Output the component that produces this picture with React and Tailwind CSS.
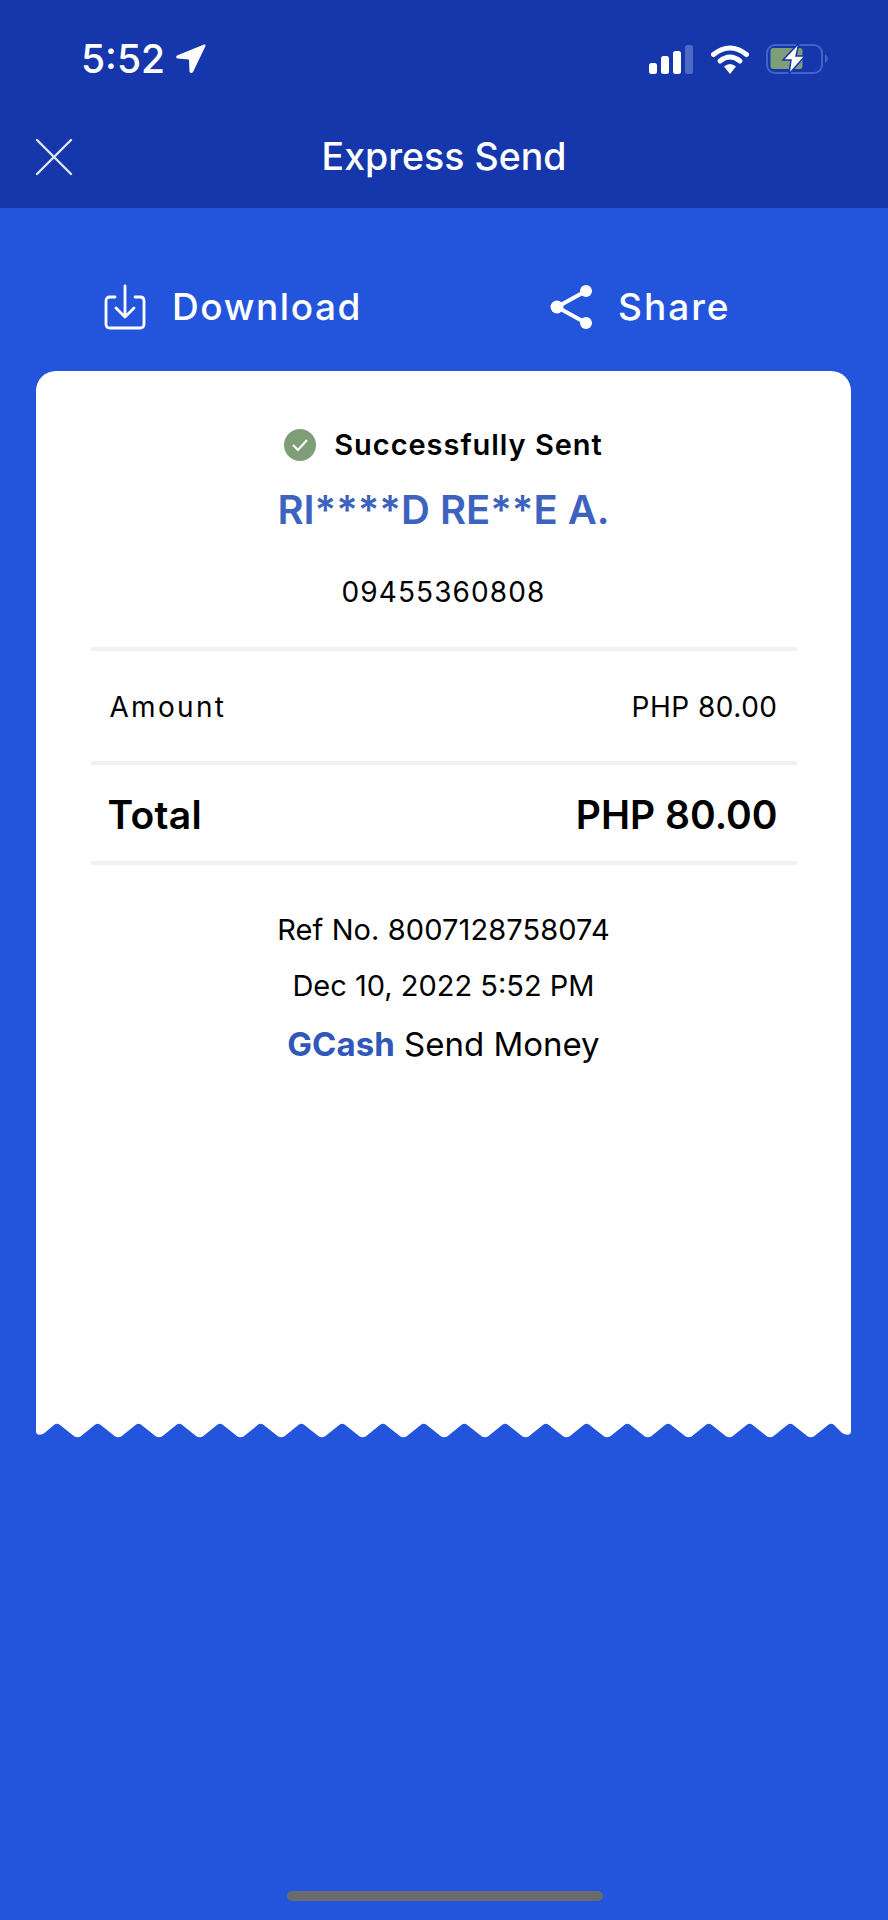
const sans = "font-['Inter','Liberation_Sans',sans-serif]";

// torn paper edge along the bottom of the receipt
function tornEdgePath() {
  const period = 40.74;
  let d = "M0 0 L0 9 Q0 12.8 3.5 12.8 Q6.5 12.8 8.5 11 L18 3 Q21 0.5 24 3 L38.5 14.5 Q41.5 16 44.5 14.5";
  for (let i = 1; i < 20; i++) {
    const p = 21 + i * period;
    d += ` L${(p - 3).toFixed(1)} 3 Q${p.toFixed(1)} 0.5 ${(p + 3).toFixed(1)} 3`;
    if (i < 19) d += ` L${(p + 17.5).toFixed(1)} 14.5 Q${(p + 20.4).toFixed(1)} 16 ${(p + 23.5).toFixed(1)} 14.5`;
  }
  d += " L806 11 Q809 12.8 811.5 12.8 Q815 12.8 815 9 L815 0 Z";
  return d;
}

function StatusBar() {
  return (
    <div className="h-[104px] pt-[40px] pl-[81px] pr-[60px] flex justify-between items-start">
      <div className="flex items-center gap-[11px] h-[38px]">
        <span className="text-white text-[39px] leading-[38px] font-medium">5:52</span>
        <svg width="30" height="30" viewBox="0 0 30 30">
          <path d="M28 0.5 L1 11.5 Q-1 13.5 1.5 14.5 L13 15.5 L13.5 27.5 Q15 30.5 17 28 L29.5 2 Q30 0 28 0.5 Z" fill="#fff" />
        </svg>
      </div>
      <div className="flex items-center h-[38px]">
        <svg width="44" height="29" viewBox="0 0 44 29" className="mr-[18px]">
          <rect x="0" y="18" width="8" height="11" rx="2.5" fill="#fff" />
          <rect x="12" y="11" width="8" height="18" rx="2.5" fill="#fff" />
          <rect x="24" y="6" width="8" height="23" rx="2.5" fill="#fff" />
          <rect x="36" y="0" width="8" height="29" rx="2.5" fill="#4d6bc6" />
        </svg>
        <svg width="38" height="29" viewBox="0 0 38 29" className="mr-[17px]">
          <path d="M2.5 9.5 Q19 -3.5 35.5 9.5" fill="none" stroke="#fff" strokeWidth="5" strokeLinecap="round" />
          <path d="M9 16 Q19 8 29 16" fill="none" stroke="#fff" strokeWidth="5" strokeLinecap="round" />
          <path d="M13 21.5 Q19 16.5 25 21.5 L19 29 Z" fill="#fff" />
        </svg>
        <svg width="62" height="32" viewBox="0 0 62 32">
          <rect x="1" y="2" width="55" height="28" rx="8" fill="none" stroke="#4263c8" strokeWidth="2" />
          <rect x="4.5" y="5" width="32" height="21" rx="3" fill="#7e9e78" />
          <path d="M59 11 Q62 14 62 16 Q62 18 59 20 Z" fill="#4263c8" />
          <path d="M33 0 L17 17 L25 17 L23 31 L39 13 L30 13 Z" fill="#fff" stroke="#1537ab" strokeWidth="1.5" />
        </svg>
      </div>
    </div>
  );
}

function CloseIcon() {
  return (
    <svg width="38" height="38" viewBox="0 0 38 38" fill="none" stroke="#dfe5f5" strokeWidth="2.4" strokeLinecap="round" className="absolute left-[35px] top-[34px]">
      <path d="M2 2 L36 36 M36 2 L2 36" />
    </svg>
  );
}

function DownloadIcon() {
  return (
    <svg width="42" height="46" viewBox="0 0 42 46" fill="none" stroke="#fff" strokeWidth="2.8" strokeLinecap="round" strokeLinejoin="round">
      <path d="M11 13 H6 Q2 13 2 17 V40 Q2 44 6 44 H36 Q40 44 40 40 V17 Q40 13 36 13 H31" />
      <path d="M21 2 V33 M12 24 L21 33 L30 24" />
    </svg>
  );
}

function ShareIcon() {
  return (
    <svg width="42" height="46" viewBox="0 0 42 46" fill="#fff" stroke="none">
      <path d="M36 7 L7 23 L36 39" fill="none" stroke="#fff" strokeWidth="4" />
      <circle cx="36" cy="7" r="6" />
      <circle cx="7" cy="23" r="6.5" />
      <circle cx="36" cy="39" r="6" />
    </svg>
  );
}

export default function App() {
  return (
    <div className={`w-[888px] h-[1920px] bg-[#2355dc] flex flex-col relative overflow-hidden ${sans}`}>
      <div className="h-[208px] bg-[#1537ab]">
        <StatusBar />
        <div className="h-[104px] relative flex justify-center pt-[29px]">
          <CloseIcon />
          <h1 className="text-white text-[37.5px] leading-[48px] font-medium">Express Send</h1>
        </div>
      </div>

      {/* actions */}
      <div className="h-[163px] pt-[76px] pl-[104px] flex items-start text-white text-[37px] leading-[46px] font-medium">
        <div className="flex items-center gap-[26px] w-[446px]">
          <DownloadIcon />
          <span className="tracking-[1.6px]">Download</span>
        </div>
        <div className="flex items-center gap-[26px]">
          <ShareIcon />
          <span className="tracking-[2px]">Share</span>
        </div>
      </div>

      {/* receipt */}
      <div className="mx-[36px] w-[815px]">
        <div className="h-[1051px] bg-white rounded-t-[20px] pt-[54px] text-black flex flex-col items-center">
          <div className="flex items-center gap-[18px] h-[40px]">
            <span className="w-[32px] h-[32px] rounded-full bg-[#7e9e78] flex items-center justify-center">
              <svg width="18" height="14" viewBox="0 0 18 14" fill="none" stroke="#fff" strokeWidth="2"><path d="M2 7 L7 12 L16 2" /></svg>
            </span>
            <span className="text-[29px] font-semibold tracking-[0.95px]">Successfully Sent</span>
          </div>
          <div className="mt-[21px] h-[48px] text-[#3d63be] text-[40px] leading-[48px] font-semibold">RI****D RE**E A.</div>
          <div className="mt-[38px] h-[40px] text-[28px] leading-[40px] tracking-[1.1px]">09455360808</div>
          <div className="mt-[35px] w-[706px] flex flex-col">
            <div className="h-[4px] bg-[#f1f1f3]"></div>
            <div className="h-[110px] pt-[2px] px-[19px] flex justify-between items-center text-[28px] tracking-[0.5px]">
              <span className="tracking-[2.3px]">Amount</span>
              <span>PHP 80.00</span>
            </div>
            <div className="h-[4px] bg-[#f1f1f3]"></div>
            <div className="h-[96px] pt-[4px] pl-[18px] pr-[19px] flex justify-between items-center text-[39px] font-semibold">
              <span className="tracking-[0.3px] -ml-[1px]">Total</span>
              <span>PHP 80.00</span>
            </div>
            <div className="h-[4px] bg-[#f1f1f3]"></div>
          </div>
          <div className="mt-[45px] text-[29px] leading-[40px] tracking-[0.1px]">Ref No. 8007128758074</div>
          <div className="mt-[16px] text-[29px] leading-[40px]">Dec 10, 2022 5:52 PM</div>
          <div className="mt-[16px] text-[33px] leading-[44px]">
            <span className="text-[#3058b8] font-bold">GCash</span> Send Money
          </div>
        </div>
        <svg width="815" height="18" viewBox="0 0 815 18" className="block">
          <path d={tornEdgePath()} fill="#fff" />
        </svg>
      </div>

      {/* home indicator */}
      <div className="absolute bottom-[19px] left-[287px] w-[316px] h-[10px] rounded-full bg-[#6b6b6b]"></div>
    </div>
  );
}
